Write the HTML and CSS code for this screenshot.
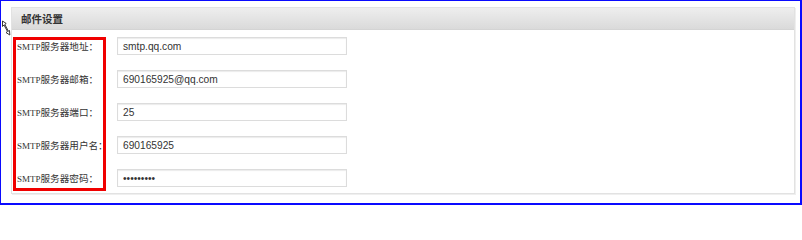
FILE: index.html
```html
<!DOCTYPE html>
<html lang="zh-CN">
<head>
<meta charset="utf-8">
<title>邮件设置</title>
<link rel="stylesheet" href="styles.css">
</head>
<body>
<div class="frame">
  <svg class="cursor" width="10" height="16" viewBox="0 0 10 16">
    <path d="M1.5 1 L1.5 6.5 L3 5 L6.5 11.5 L5 12.5 L8.8 15 L8.5 10.5 L7.3 11.2 L3.8 4.3 L5.2 3.5 Z" fill="#fff" stroke="#222" stroke-width="0.9"/>
  </svg>
  <div class="panel">
    <div class="panel-head">邮件设置</div>
    <div class="panel-body">
      <div class="row"><span class="label"><span class="en">SMTP</span>服务器地址：</span><input class="field" type="text" value="smtp.qq.com"></div>
      <div class="row"><span class="label"><span class="en">SMTP</span>服务器邮箱：</span><input class="field" type="text" value="690165925@qq.com"></div>
      <div class="row"><span class="label"><span class="en">SMTP</span>服务器端口：</span><input class="field" type="text" value="25"></div>
      <div class="row"><span class="label"><span class="en">SMTP</span>服务器用户名：</span><input class="field" type="text" value="690165925"></div>
      <div class="row"><span class="label"><span class="en">SMTP</span>服务器密码：</span><input class="field" type="password" value="123456789"></div>
    </div>
  </div>
  <div class="highlight"></div>
</div>
</body>
</html>
```
FILE: styles.css
```css
html, body {
  margin: 0;
  padding: 0;
  background: #fff;
}
.frame {
  position: relative;
  box-sizing: border-box;
  width: 802px;
  height: 205px;
  border: 1px solid #0a0aff;
  border-right-width: 2px;
  border-bottom-width: 2px;
  padding: 6px 5px 0 10px;
  font-family: "Liberation Sans", "Noto Sans CJK SC", sans-serif;
}
.cursor {
  position: absolute;
  left: 0;
  top: 19px;
}
.panel {
  border: 1px solid #e2e2e2;
  box-shadow: 1px 1px 0 #efefef;
  background: #fff;
}
.panel-head {
  height: 21px;
  line-height: 22px;
  padding-left: 9px;
  background: linear-gradient(#eeeeee, #dadada);
  border-bottom: 1px solid #d4d4d4;
  font-family: "Noto Sans CJK SC", sans-serif;
  font-size: 10.5px;
  font-weight: bold;
  color: #333;
}
.panel-body {
  display: flex;
  flex-direction: column;
  gap: 15px;
  padding: 7px 0 6px 5px;
}
.row {
  display: flex;
  align-items: center;
  height: 18px;
}
.label {
  width: 100px;
  flex: none;
  font-family: "Noto Sans CJK SC", sans-serif;
  font-size: 9.6px;
  color: #333;
  white-space: nowrap;
}
.label .en {
  font-family: "Liberation Serif", serif;
  font-size: 9px;
}
.field {
  box-sizing: border-box;
  width: 230px;
  height: 18px;
  margin: 0;
  padding: 0 5px;
  border: 1px solid #dcdcdc;
  box-shadow: inset 0 1px 1px #ececec;
  font-family: "Liberation Sans", Arial, sans-serif;
  font-size: 10.2px;
  color: #333;
  background: #fff;
  outline: none;
}
.highlight {
  position: absolute;
  left: 12px;
  top: 36px;
  width: 87px;
  height: 148px;
  border: 3px solid #f00000;
  pointer-events: none;
}
```
